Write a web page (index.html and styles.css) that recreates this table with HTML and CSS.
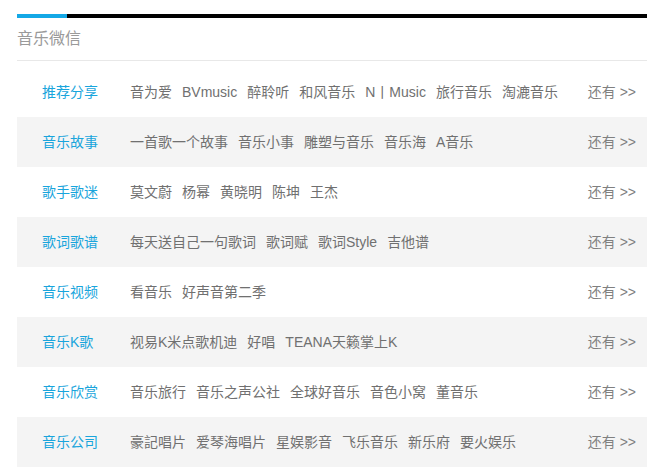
FILE: index.html
```html
<!DOCTYPE html>
<html lang="zh">
<head>
<meta charset="utf-8">
<link rel="stylesheet" href="styles.css">
</head>
<body>
<div class="box">
  <div class="topbar"><span class="topbar-accent"></span></div>
  <div class="title">音乐微信</div>
  <div class="list">
    <div class="row">
      <span class="label">推荐分享</span>
      <span class="items"><a>音为爱</a><a>BVmusic</a><a>醉聆听</a><a>和风音乐</a><a>N丨Music</a><a>旅行音乐</a><a>淘漉音乐</a></span>
      <span class="more">还有 &gt;&gt;</span>
    </div>
    <div class="row alt">
      <span class="label">音乐故事</span>
      <span class="items"><a>一首歌一个故事</a><a>音乐小事</a><a>雕塑与音乐</a><a>音乐海</a><a>A音乐</a></span>
      <span class="more">还有 &gt;&gt;</span>
    </div>
    <div class="row">
      <span class="label">歌手歌迷</span>
      <span class="items"><a>莫文蔚</a><a>杨幂</a><a>黄晓明</a><a>陈坤</a><a>王杰</a></span>
      <span class="more">还有 &gt;&gt;</span>
    </div>
    <div class="row alt">
      <span class="label">歌词歌谱</span>
      <span class="items"><a>每天送自己一句歌词</a><a>歌词赋</a><a>歌词Style</a><a>吉他谱</a></span>
      <span class="more">还有 &gt;&gt;</span>
    </div>
    <div class="row">
      <span class="label">音乐视频</span>
      <span class="items"><a>看音乐</a><a>好声音第二季</a></span>
      <span class="more">还有 &gt;&gt;</span>
    </div>
    <div class="row alt">
      <span class="label">音乐K歌</span>
      <span class="items"><a>视易K米点歌机迪</a><a>好唱</a><a>TEANA天籁掌上K</a></span>
      <span class="more">还有 &gt;&gt;</span>
    </div>
    <div class="row">
      <span class="label">音乐欣赏</span>
      <span class="items"><a>音乐旅行</a><a>音乐之声公社</a><a>全球好音乐</a><a>音色小窝</a><a>董音乐</a></span>
      <span class="more">还有 &gt;&gt;</span>
    </div>
    <div class="row alt">
      <span class="label">音乐公司</span>
      <span class="items"><a>豪記唱片</a><a>爱琴海唱片</a><a>星娱影音</a><a>飞乐音乐</a><a>新乐府</a><a>要火娱乐</a></span>
      <span class="more">还有 &gt;&gt;</span>
    </div>
  </div>
</div>
</body>
</html>
```
FILE: styles.css
```css
html, body {
  margin: 0;
  padding: 0;
  background: #fff;
}
body {
  font-family: "Liberation Sans", "Noto Sans CJK SC", sans-serif;
  padding-top: 14px;
}
.box {
  margin-left: 17px;
  width: 630px;
}
.topbar {
  height: 4px;
  background: #000;
  display: flex;
}
.topbar-accent {
  width: 50px;
  background: #14a8e6;
}
.title {
  height: 42px;
  line-height: 42px;
  font-size: 16px;
  color: #9a9a9a;
  border-bottom: 1px solid #e8e8e8;
}
.list {
  margin-top: 6px;
}
.row {
  height: 50px;
  display: flex;
  align-items: center;
  padding: 0 11px 0 25px;
  font-size: 14px;
  line-height: 20px;
}
.row.alt {
  background: #f4f4f4;
}
.label {
  width: 88px;
  flex: none;
  color: #19a5dc;
}
.items {
  flex: 1;
  display: flex;
  align-items: baseline;
  gap: 10px;
  color: #707070;
  white-space: nowrap;
}
.more {
  color: #808080;
}
```
